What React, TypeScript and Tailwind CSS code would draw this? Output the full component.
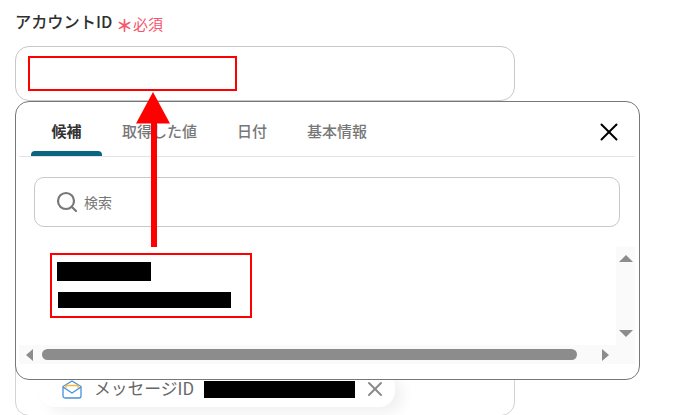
import { Search, X } from 'lucide-react';
import React from 'react';

const tabs = ['候補', '取得した値', '日付', '基本情報'];

const MailIcon: React.FC = () => (
  <svg width="20" height="19" viewBox="0 0 20 19" fill="none" className="shrink-0">
    <path d="M1 6.5 10 1l9 5.5V16a2 2 0 0 1-2 2H3a2 2 0 0 1-2-2Z" stroke="#4a90d9" strokeWidth="1.3" />
    <path d="M1 7l9 6 9-6" stroke="#4a90d9" strokeWidth="1.3" />
    <path d="M4 8V5.5h12V8" stroke="#f5b942" strokeWidth="1.3" />
  </svg>
);

const App: React.FC = () => (
  <div className="relative w-[687px] h-[415px] overflow-hidden bg-white font-['Noto_Sans_CJK_JP','Noto_Sans',sans-serif]">
    <div className="flex flex-col pl-[15px] pt-[9px]">
      <div className="flex items-center h-[26px]">
        <span className="pb-[2px] w-[96px] text-[16.2px] font-medium text-[#2f2f2f] leading-none whitespace-nowrap">アカウントID</span>
        <span className="ml-[5px] mt-[4px] w-[16px] text-[17px] font-bold text-[#f4566c] leading-none">＊</span>
        <span className="ml-[1px] mt-[2px] text-[15px] text-[#f4566c] leading-none">必須</span>
      </div>
      <div className="mt-[11px] w-[500px] h-[55px] rounded-[14px] border border-[#c8c8c8]" />
      <div className="mt-[8px] w-[500px] h-[307px] rounded-[14px] border border-[#cfd4d8] flex flex-col justify-end px-[23px] pb-[8px]">
        <div className="flex items-center h-[36px] w-[356px] rounded-[16px] bg-white pl-[23px] shadow-[8px_6px_14px_rgba(0,0,0,0.06)]">
          <MailIcon />
          <span className="ml-[12px] pb-[2px] text-[16.8px] text-[#666] leading-none whitespace-nowrap">メッセージID</span>
          <div className="ml-[10px] w-[151px] h-[17px] bg-black" />
          <X className="ml-[8px] w-[24px] h-[24px] text-[#8a8a8a]" strokeWidth={2} />
        </div>
      </div>
    </div>

    {/* popup */}
    <div className="absolute left-[15px] top-[101px] w-[625px] h-[279px] flex flex-col rounded-[14px] border border-[#777] bg-white pl-[3px] pr-[4px]">
      <div className="flex items-stretch h-[55px] border-b border-[#e4e4e4]">
        {tabs.map((tab, i) => (
          <div
            key={tab}
            className={
              i === 0
                ? 'relative flex items-center justify-center ml-[12px] w-[71px] pt-[4px] text-[15px] font-bold text-[#333]'
                : 'flex items-center justify-center px-[20px] pt-[4px] text-[15px] font-medium text-[#777]'
            }
          >
            <span>{tab}</span>
            {i === 0 && <div className="absolute left-0 right-0 bottom-0 h-[5px] rounded-t-[4px] bg-[#0b6580]" />}
          </div>
        ))}
        <div className="ml-auto flex items-center pr-[11px] pt-[5px]">
          <X className="w-[30px] h-[30px] text-black" strokeWidth={1.6} />
        </div>
      </div>
      <div className="mt-[20px] mx-[15px] h-[50px] flex items-center rounded-[10px] border border-[#c8c8c8] pl-[20px]">
        <Search className="w-[24px] h-[24px] text-[#777]" strokeWidth={2.2} />
        <span className="ml-[5px] text-[14px] text-[#777]">検索</span>
      </div>
      <div className="mt-[20px] flex-1 flex flex-col">
        <div className="flex-1 flex justify-end">
          <div className="w-[19px] flex flex-col items-center justify-between bg-[#fafafa] pt-[8px] pb-[8px]">
            <div className="w-0 h-0 border-x-[7px] border-x-transparent border-b-[7px] border-b-[#8c8c8c]" />
            <div className="w-0 h-0 border-x-[7px] border-x-transparent border-t-[7px] border-t-[#8c8c8c]" />
          </div>
        </div>
        <div className="mb-[15px] h-[19px] flex items-center bg-[#fafafa] pl-[7px]">
          <div className="w-0 h-0 border-y-[6px] border-y-transparent border-r-[7px] border-r-[#8c8c8c]" />
          <div className="ml-[9px] w-[535px] h-[11px] rounded-full bg-[#8c8c8c]" />
          <div className="ml-[25px] w-0 h-0 border-y-[6px] border-y-transparent border-l-[7px] border-l-[#8c8c8c]" />
        </div>
      </div>
    </div>

    {/* annotations */}
    <div className="absolute left-[28px] top-[56px] w-[209px] h-[35px] border-2 border-[#ff0000]" />
    <div className="absolute left-[50px] top-[253px] w-[202px] h-[65px] border-2 border-[#ff0000]" />
    <div className="absolute left-[57px] top-[262px] w-[94px] h-[19px] bg-black" />
    <div className="absolute left-[58px] top-[292px] w-[173px] h-[16px] bg-black" />
    <svg className="absolute left-[130px] top-[88px]" width="46" height="162" viewBox="0 0 46 162">
      <path d="M23 4 40 35.5H6Z" fill="#ff0000" />
      <rect x="21" y="30" width="6" height="129" fill="#ff0000" />
    </svg>
  </div>
);

export default App;
